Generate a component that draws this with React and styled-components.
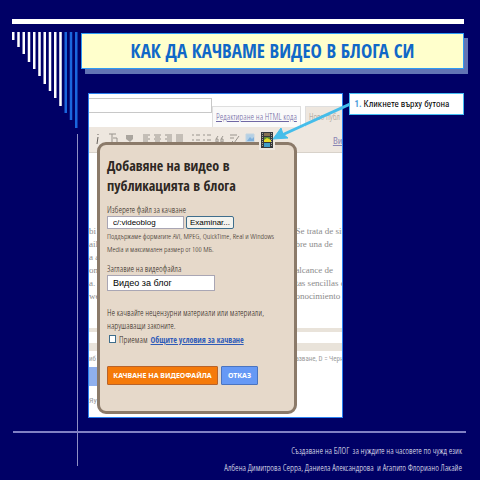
import React, { useState } from 'react';
import styled, { createGlobalStyle } from 'styled-components';

const GlobalStyle = createGlobalStyle`
  * {
    box-sizing: border-box;
  }
  html, body, #root {
    min-height: 100vh;
  }
  body {
    margin: 0;
    background-color: #000066;
    font-family: "Roboto Condensed", "Liberation Sans", sans-serif;
  }
`;

const Slide = styled.main`
  display: flex;
  flex-direction: column;
  min-height: 100vh;
  padding: 19px 14px 0 12px;
  overflow: hidden;
`;

const TopBar = styled.div`
  height: 5px;
  margin-right: 2px;
  background-color: #ffffff;
`;

const SlideGrid = styled.div`
  display: grid;
  grid-template-columns: 66px minmax(0, 1fr);
  margin-top: 8px;
`;

const Rail = styled.div`
  grid-column: 1;
  grid-row: 1 / 5;
  display: flex;
  flex-direction: column;
  align-items: flex-end;
  margin-bottom: 10px;
`;

const Rule = styled.div`
  flex: 1;
  width: 1px;
  margin-top: 6px;
  background-color: #8f8fc4;
`;

const Title = styled.h1`
  grid-column: 2;
  grid-row: 1;
  margin: 1px 2px 0 3px;
  border: 1px solid #2e9bf5;
  background-color: #ffffcc;
  box-shadow: 4px 5px 0 #6274b4;
  color: #1068c8;
  font-family: "Open Sans Condensed", sans-serif;
  font-size: 19px;
  line-height: 34px;
  text-align: center;
  white-space: nowrap;
`;

const Content = styled.div`
  grid-column: 2;
  grid-row: 2;
  display: grid;
  grid-template-columns: 254fr 114fr;
  column-gap: 6px;
  align-items: start;
  margin: 24px 2px 0 10px;
`;

const Screen = styled.section`
  position: relative;
  height: 325px;
  overflow: hidden;
  border: 1px solid #2a80ef;
  background-color: #ffffff;
`;

const EditorHead = styled.div`
  display: flex;
  height: 33px;
  overflow: hidden;
`;

const PostTitle = styled.input`
  width: 123px;
  height: 15px;
  margin-top: 4px;
  border: 1px solid #c8c8c8;
  border-left: none;
  flex-shrink: 0;
`;

const Tab = styled.a`
  align-self: flex-end;
  flex-shrink: 0;
  height: 21px;
  margin-right: 4px;
  padding: 0 3px;
  border: 1px solid #dedede;
  border-bottom: none;
  background-color: ${(props) => (props.$active ? '#eee7df' : '#fafafa')};
  color: ${(props) => (props.$active ? '#a39a90' : '#7068a4')};
  font-family: "Open Sans Condensed Light", "Roboto Condensed", sans-serif;
  font-size: 9px;
  line-height: 20px;
  text-decoration: ${(props) => (props.$active ? 'none' : 'underline')};
  white-space: nowrap;
`;

const Toolbar = styled.div`
  display: flex;
  justify-content: space-between;
  height: 26px;
  padding: 6px 0 0 6px;
  border-bottom: 1px solid #d8d2ca;
  background-color: #eee7df;
`;

const PreviewLink = styled.a`
  margin-top: 2px;
  color: #8d87b4;
  font-size: 9px;
  line-height: 12px;
`;

const PostText = styled.div`
  height: 175px;
  padding-top: 72px;
`;

const PostLine = styled.div`
  display: grid;
  grid-template-columns: 1fr 47px;
  height: 13px;
  color: #8c8c8c;
  font-family: "Liberation Serif", serif;
  font-size: 9px;
  line-height: 13px;
  white-space: nowrap;
`;

const LabelsBar = styled.div`
  height: 23px;
  border: solid #e9e3da;
  border-width: 4px 0 8px;
`;

const Shortcuts = styled.div`
  display: grid;
  grid-template-columns: 1fr 47px;
  padding: 3px 0;
  color: #9c9c9c;
  font-size: 7px;
  line-height: 10px;
  white-space: nowrap;
`;

const PublishBar = styled.div`
  width: 60px;
  height: 19px;
  background-color: #8fb0ee;
`;

const BackLink = styled.div`
  padding-top: 9px;
  color: #9c9c9c;
  font-size: 8px;
  line-height: 12px;
`;

const Dialog = styled.form`
  position: absolute;
  top: 48px;
  left: 8px;
  right: 45px;
  bottom: 3px;
  padding: 11px 7px 0;
  border: 3px solid #8b7a69;
  border-radius: 9px;
  background-color: #e6d9ca;
  color: #2e2620;
  font-family: "Open Sans Condensed Light", "Roboto Condensed", sans-serif;
  font-size: 9px;
  line-height: 13px;
`;

const DialogTitle = styled.h2`
  margin: 0 0 7px;
  color: #2e2823;
  font-family: "Open Sans Condensed", sans-serif;
  font-size: 14px;
  line-height: 20px;
`;

const Label = styled.label`
  display: block;
`;

const FileRow = styled.div`
  display: flex;
  gap: 2px;
`;

const TextField = styled.input`
  width: ${(props) => props.$width};
  height: ${(props) => props.$height};
  padding: 0 5px;
  border: 1px solid #a9a6b4;
  background-color: #ffffff;
  color: #000000;
  font-family: "Liberation Sans", sans-serif;
  font-size: ${(props) => props.$size};
`;

const BrowseButton = styled.button`
  width: 48px;
  height: 13px;
  padding: 0;
  border: 1px solid #3f6e8c;
  border-radius: 2px;
  background-color: #f3f3ee;
  color: #000000;
  font-family: "Liberation Sans", sans-serif;
  font-size: 8px;
  line-height: 10px;
`;

const Hint = styled.p`
  margin: 0 0 7px;
  font-size: 8px;
  white-space: nowrap;
`;

const Warning = styled.p`
  margin: 15px 0 0;
  white-space: nowrap;
`;

const AcceptRow = styled.div`
  display: flex;
  align-items: center;
  gap: 3px;
  height: 14px;
  white-space: nowrap;
`;

const Tick = styled.input`
  appearance: none;
  width: 7px;
  height: 8px;
  margin: 0 0 0 2px;
  border: 1px solid #3f6e8c;
  background-color: #ffffff;
  &:checked {
    background-color: #3f6e8c;
  }
`;

const TermsLink = styled.a`
  color: #2f5bb8;
  font-family: "Open Sans Condensed", sans-serif;
  font-size: 8px;
  font-weight: bold;
`;

const Actions = styled.div`
  display: flex;
  gap: 3px;
  margin-top: 20px;
`;

const ActionButton = styled.button`
  width: ${(props) => props.$width};
  height: 19px;
  padding: 0;
  border: 1px solid ${(props) => props.$edge};
  border-radius: 1px;
  background-color: ${(props) => props.$color};
  color: #ffffff;
  font-family: "Noto Sans", sans-serif;
  font-size: 7px;
  font-weight: bold;
  line-height: 16px;
  white-space: nowrap;
`;

const VideoButton = styled.button`
  position: absolute;
  top: 36px;
  right: 67px;
  display: flex;
  padding: 2px;
  border: none;
  background-color: #eee7df;
`;

const Callout = styled.p`
  position: relative;
  margin: 0;
  padding: 0 4px;
  border: 1px solid #45bdf2;
  background-color: #ffffff;
  color: #000000;
  font-family: "Roboto Condensed", sans-serif;
  font-size: 9px;
  line-height: 20px;
  white-space: nowrap;
`;

const Step = styled.b`
  color: #4f9fdc;
`;

const Arrow = styled.svg`
  position: absolute;
  top: 7px;
  right: 100%;
`;

const FooterRule = styled.div`
  grid-column: 1 / -1;
  grid-row: 3;
  height: 2px;
  margin: 13px 0 0 1px;
  background-color: #8080c4;
`;

const Footer = styled.footer`
  grid-column: 1 / -1;
  grid-row: 4;
  padding-top: 9px;
  margin-right: 4px;
  color: #f0f0fa;
  font-family: "Open Sans Condensed Light", "Roboto Condensed", sans-serif;
  font-size: 9px;
  line-height: 17px;
  text-align: right;
  white-space: pre;
`;

const Credit = styled.p`
  margin: 0;
`;

const stripes = [8, 15, 22, 30, 37, 44, 52, 59, 66, 74, 81, 88, 96];

const postLines = [
  ['bi', 'Se trata de sit'],
  ['ails', 'bre una de'],
  ['a a', ''],
  ['on', ' alcance de'],
  ['a.', 'tas sencillas c'],
  ['we', 'onocimiento'],
];

const Stripes = () => (
  <svg width="66" height="96" viewBox="0 0 66 96" aria-hidden="true">
    {stripes.map((height, i) => (
      <rect
        key={height}
        x={i * 5.25}
        width="2.5"
        height={height}
        fill={i > 9 ? '#1a66dd' : '#ffffff'}
      />
    ))}
  </svg>
);

const ToolbarIcons = () => (
  <svg width="170" height="14" viewBox="0 0 170 14" fill="none" stroke="#9a958e" aria-hidden="true">
    <path d="M3 4l-1 7M3 1v1" stroke="#66615c" />
    <path d="M14 1h7M17 1v9M18 5h4v6h-3" />
    <path d="M31 2h7v4l-3 3l-4 -3z" fill="#aaa59e" stroke="none" />
    <path d="M48 2h7M48 4h5M48 6h7M48 8h5M59 2h7M60 4h5M59 6h7M60 8h5M70 2h7M72 4h5M70 6h7M72 8h5M81 2h7M81 4h7M81 6h7M81 8h7" />
    <path d="M97 2h2M101 2h4M97 7h2M101 7h4M108 2h2M112 2h4M108 7h2M112 7h4" />
    <path d="M123 3l-2 3v3h2v-3h-2M128 3l-2 3v3h2v-3h-2" />
    <path d="M135 2h7M135 5h4M137 8l2 2l5 -7" />
    <path d="M151 1h8v8h-8z" fill="#b3d0e6" stroke="#c3d4e0" />
    <path d="M152 8l3 -4l2 2l2 -2v4z" fill="#7fb0dc" stroke="none" />
  </svg>
);

const FilmIcon = () => (
  <svg width="12" height="16" viewBox="0 0 12 16" aria-hidden="true">
    <rect width="12" height="16" fill="#35383c" />
    <path d="M1.500 1v14M10.500 1v14" stroke="#a8a8a0" strokeDasharray="1 1" />
    <rect x="3" y="1" width="6" height="3" fill="#857052" />
    <rect x="3" y="5" width="6" height="3" fill="#5c8c36" />
    <path d="M3 8l3 -2l4 2v2h-7z" fill="#e8dc28" />
    <rect x="3" y="11" width="6" height="4" fill="#3f9cc8" />
  </svg>
);

const UploadDialog = () => {
  const [file, setFile] = useState('c/:videoblog');
  const [name, setName] = useState('Видео за блог');
  const [accepted, setAccepted] = useState(false);

  return (
    <Dialog onSubmit={(event) => event.preventDefault()}>
      <DialogTitle>
        Добавяне на видео в<br />публикацията в блога
      </DialogTitle>
      <Label htmlFor="file">Изберете файл за качване</Label>
      <FileRow>
        <TextField
          id="file"
          $width="77px"
          $height="13px"
          $size="8px"
          value={file}
          onChange={(event) => setFile(event.target.value)}
        />
        <BrowseButton type="button">Examinar...</BrowseButton>
      </FileRow>
      <Hint>
        Поддържаме форматите AVI, MPEG, QuickTime, Real и Windows<br />
        Media и максимален размер от 100 МБ.
      </Hint>
      <Label htmlFor="name">Заглавие на видеофайла</Label>
      <TextField
        id="name"
        $width="108px"
        $height="16px"
        $size="9px"
        value={name}
        onChange={(event) => setName(event.target.value)}
      />
      <Warning>
        Не качвайте нецензурни материали или материали,<br />
        нарушаващи законите.
      </Warning>
      <AcceptRow>
        <Tick
          id="accept"
          type="checkbox"
          checked={accepted}
          onChange={(event) => setAccepted(event.target.checked)}
        />
        <label htmlFor="accept">Приемам</label>
        <TermsLink href="#terms">Общите условия за качване</TermsLink>
      </AcceptRow>
      <Actions>
        <ActionButton type="submit" $width="111px" $color="#f57a0a" $edge="#b8632a">
          КАЧВАНЕ НА ВИДЕОФАЙЛА
        </ActionButton>
        <ActionButton type="button" $width="37px" $color="#6699f5" $edge="#4a74c0">
          ОТКАЗ
        </ActionButton>
      </Actions>
    </Dialog>
  );
};

const App = () => (
  <>
    <GlobalStyle />
    <Slide>
      <TopBar />
      <SlideGrid>
        <Rail>
          <Stripes />
          <Rule />
        </Rail>
        <Title>КАК ДА КАЧВАМЕ ВИДЕО В БЛОГА СИ</Title>
        <Content>
          <Screen>
            <EditorHead>
              <PostTitle aria-label="Заглавие" />
              <Tab href="#html">Редактиране на HTML кода</Tab>
              <Tab href="#new" $active>Ново публ</Tab>
            </EditorHead>
            <Toolbar>
              <ToolbarIcons />
              <PreviewLink href="#preview">Ви</PreviewLink>
            </Toolbar>
            <PostText>
              {postLines.map(([start, end]) => (
                <PostLine key={start}>
                  <span>{start}</span>
                  <span>{end}</span>
                </PostLine>
              ))}
            </PostText>
            <LabelsBar />
            <Shortcuts>
              <span>иб</span>
              <span>азване, D = Черн</span>
            </Shortcuts>
            <PublishBar />
            <BackLink>Яу</BackLink>
            <UploadDialog />
            <VideoButton type="button" aria-label="Видео">
              <FilmIcon />
            </VideoButton>
          </Screen>
          <Callout>
            <Arrow width="78" height="40" viewBox="0 0 78 40" aria-hidden="true">
              <path d="M78 3L10 34" stroke="#45bdea" strokeWidth="3" />
              <path d="M1 38L9 27L11 33L16 37z" fill="#45bdea" stroke="#45bdea" />
            </Arrow>
            <Step>1.</Step> Кликнете върху бутона
          </Callout>
        </Content>
        <FooterRule />
        <Footer>
          <Credit>Създаване на БЛОГ  за нуждите на часовете по чужд език</Credit>
          <Credit>Албена Димитрова Серра, Даниела Александрова  и Агапито Флориано Лакайе</Credit>
        </Footer>
      </SlideGrid>
    </Slide>
  </>
);

export default App;
